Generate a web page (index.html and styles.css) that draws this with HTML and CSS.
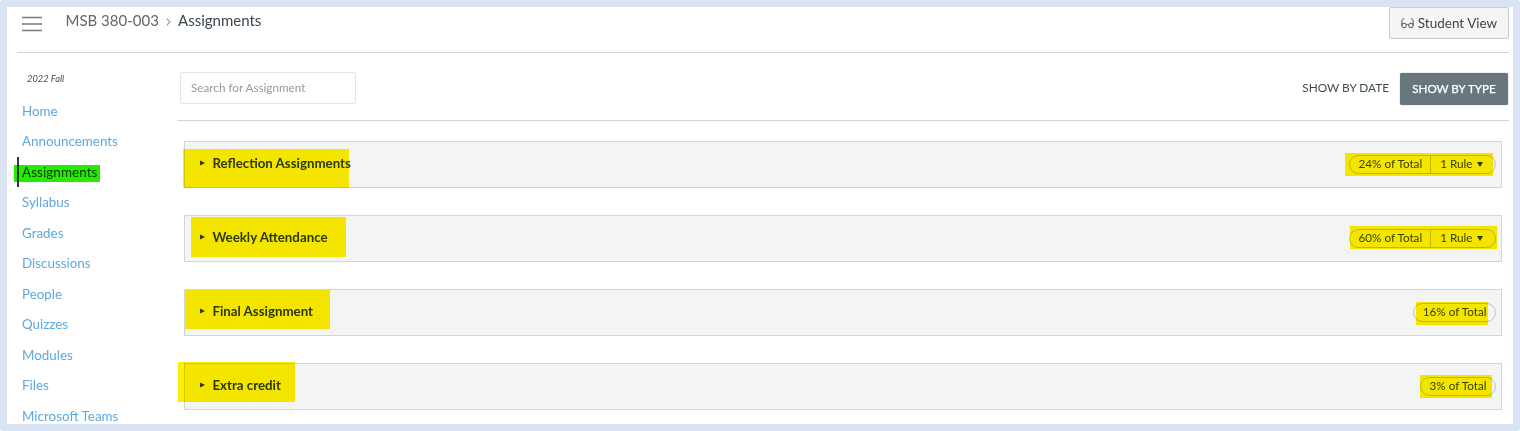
FILE: index.html
```html
<!DOCTYPE html>
<html lang="en">
<head>
<meta charset="utf-8">
<title>Assignments</title>
<link rel="stylesheet" href="styles.css">
</head>
<body>
<div class="frame">
  <header class="topbar">
    <svg class="menu" width="20" height="16" viewBox="0 0 20 16"><path d="M0 1.5h20M0 8h20M0 14.5h20" stroke="#7b7b7b" stroke-width="1.5"/></svg>
    <nav class="crumbs">
      <span class="course">MSB 380-003</span>
      <svg class="chevron" width="5" height="8" viewBox="0 0 5 8"><path d="M.8.6 4 4 .8 7.4" fill="none" stroke="#999" stroke-width="1.1"/></svg>
      <span class="current">Assignments</span>
    </nav>
    <button class="student-view">
      <svg width="13" height="11" viewBox="0 0 13 11" fill="none" stroke="#4a5459" stroke-width="1"><circle cx="3.1" cy="7.5" r="2.3"/><circle cx="9.9" cy="7.5" r="2.3"/><path d="M.8 7.5V3.6C.8 1.6 1.5.9 3.2.7M12.2 7.5V3.6C12.2 1.6 11.5.9 9.8.7M5.3 6.8q1.2-.7 2.4 0"/></svg>
      <span>Student View</span>
    </button>
  </header>
  <div class="columns">
    <aside class="sidebar">
      <div class="term">2022 Fall</div>
      <nav class="links">
        <a>Home</a>
        <a>Announcements</a>
        <a class="active">Assignments<i class="mark mark-nav"></i></a>
        <a>Syllabus</a>
        <a>Grades</a>
        <a>Discussions</a>
        <a>People</a>
        <a>Quizzes</a>
        <a>Modules</a>
        <a>Files</a>
        <a>Microsoft Teams</a>
      </nav>
    </aside>
    <main class="content">
      <div class="toolbar">
        <input class="search" type="text" placeholder="Search for Assignment">
        <div class="toggle">
          <span class="by-date">SHOW BY DATE</span>
          <span class="by-type">SHOW BY TYPE</span>
        </div>
      </div>
      <div class="groups">
        <section class="group">
          <svg class="arrow" width="5" height="6" viewBox="0 0 5 6"><path d="M0 .4 5 2.9 0 5.4z"/></svg>
          <h2>Reflection Assignments</h2>
          <div class="pill"><span class="total">24% of Total</span><span class="rule">1 Rule<svg width="6" height="5" viewBox="0 0 6 5"><path d="M0 0h6L3 5z"/></svg></span></div>
          <i class="mark title-1"></i><i class="mark pill-1"></i>
        </section>
        <section class="group">
          <svg class="arrow" width="5" height="6" viewBox="0 0 5 6"><path d="M0 .4 5 2.9 0 5.4z"/></svg>
          <h2>Weekly Attendance</h2>
          <div class="pill"><span class="total">60% of Total</span><span class="rule">1 Rule<svg width="6" height="5" viewBox="0 0 6 5"><path d="M0 0h6L3 5z"/></svg></span></div>
          <i class="mark title-2"></i><i class="mark pill-2"></i>
        </section>
        <section class="group">
          <svg class="arrow" width="5" height="6" viewBox="0 0 5 6"><path d="M0 .4 5 2.9 0 5.4z"/></svg>
          <h2>Final Assignment</h2>
          <div class="pill"><span class="total">16% of Total</span></div>
          <i class="mark title-3"></i><i class="mark pill-3"></i>
        </section>
        <section class="group">
          <svg class="arrow" width="5" height="6" viewBox="0 0 5 6"><path d="M0 .4 5 2.9 0 5.4z"/></svg>
          <h2>Extra credit</h2>
          <div class="pill"><span class="total">3% of Total</span></div>
          <i class="mark title-4"></i><i class="mark pill-4"></i>
        </section>
      </div>
    </main>
  </div>
</div>
</body>
</html>
```
FILE: styles.css
```css
* { box-sizing: border-box; }
html { background: #fff; }
body { margin: 0; height: 431px; overflow: hidden; font-family: Lato, "Open Sans", sans-serif; color: #2d3b45; }
.frame { height: 431px; border: 7px solid #dae3f3; border-radius: 3px; background: #fff; overflow: hidden; }

.topbar { display: flex; align-items: flex-start; height: 46px; margin: 0 4px 0 10px; border-bottom: 1px solid #cdd5d8; }
.menu { margin: 9px 0 0 5px; }
.crumbs { display: flex; align-items: center; height: 28px; margin-left: 23.5px; font-size: 15px; }
.crumbs span { margin-top: -2px; }
.course { width: 100.5px; color: #666; white-space: nowrap; }
.chevron { margin: 2px 7px 0 0; }
.current { color: #3a474f; }
.student-view { display: flex; align-items: center; justify-content: center; gap: 4px; width: 120px; height: 32px; margin-left: auto; padding: 0 0 1px; border: 1px solid #c7cdd1; border-radius: 2px; background: #f5f5f5; color: #3a474f; font: 13.5px Lato, sans-serif; white-space: nowrap; }
.student-view svg { margin-top: 1px; }

.columns { display: flex; }
.sidebar { width: 170px; padding: 19px 0 0 10px; flex: none; }
.term { height: 14px; padding-left: 10px; font-size: 9.3px; line-height: 14px; font-style: italic; color: #45525a; }
.links { display: flex; flex-direction: column; padding-top: 9.8px; }
.links a { position: relative; height: 30.5px; padding-left: 5px; line-height: 30px; font-size: 13.4px; color: #5ea9dd; white-space: nowrap; }
.links .active { border-left: 2px solid #2d3b45; padding-left: 3px; color: #2d3b45; letter-spacing: .1px; }

.content { flex: 1; padding-right: 4px; }
.toolbar { display: flex; align-items: flex-start; justify-content: space-between; height: 68px; padding: 19px 1px 0 3px; border-bottom: 1px solid #cdd5d8; }
.search { width: 176px; height: 32px; padding: 0 10px 2px; border: 1px solid #dde5ea; border-radius: 2px; font: 11.7px Lato, sans-serif; }
.search::placeholder { color: #989898; opacity: 1; }
.toggle { display: flex; align-items: center; gap: 11px; padding-top: 1px; font-size: 11.8px; white-space: nowrap; }
.by-date { margin-top: -3px; color: #3f4c54; }
.by-type { width: 108px; height: 32px; line-height: 31px; text-align: center; border-radius: 2px; background: #68777d; color: #fff; font-size: 11.6px; -webkit-text-stroke: .25px #fff; box-shadow: 0 0 1px #68777d; }

.groups { display: flex; flex-direction: column; gap: 27px; padding: 20px 7.5px 0 7px; }
.group { position: relative; display: flex; align-items: center; height: 47px; padding: 0 5px 0 15px; border: 1px solid #cfd7da; background: #f4f4f4; }
.arrow { margin-top: -4px; fill: #2d3b45; }
.group h2 { margin: -4px 0 0 7.4px; font-size: 13.3px; font-weight: 700; white-space: nowrap; color: #2d3b45; }
.pill { display: flex; height: 19px; margin-left: auto; border: 1px solid #bfc3c6; border-radius: 10px; font-size: 11.7px; line-height: 14px; white-space: nowrap; color: #3a474f; }
.total { padding: 0 8px 0 9px; }
.rule { display: flex; align-items: flex-start; gap: 4px; padding: 0 12px 0 9px; border-left: 1px solid #bfc3c6; }
.rule svg { margin-top: 6px; fill: #2d3b45; }

/* Highlighter strokes laid over the interface */
.mark { position: absolute; mix-blend-mode: multiply; background: #fff000; }
.mark-nav { left: -5px; top: 8px; width: 86px; height: 17px; background: #25ec00; }
.title-1 { left: -2px; top: 7px; width: 166px; height: 39px; }
.title-2 { left: 6px; top: 1px; width: 155px; height: 40px; }
.title-3 { left: 0; top: 0; width: 145px; height: 39px; }
.title-4 { left: -7px; top: -2px; width: 117px; height: 40px; }
.pill-1 { right: 8px; top: 11px; width: 148px; height: 23px; }
.pill-2 { right: 4px; top: 10px; width: 147px; height: 23px; }
.pill-3 { right: 13px; top: 12px; width: 72px; height: 23px; }
.pill-4 { right: 9px; top: 11px; width: 72px; height: 23px; }
```
